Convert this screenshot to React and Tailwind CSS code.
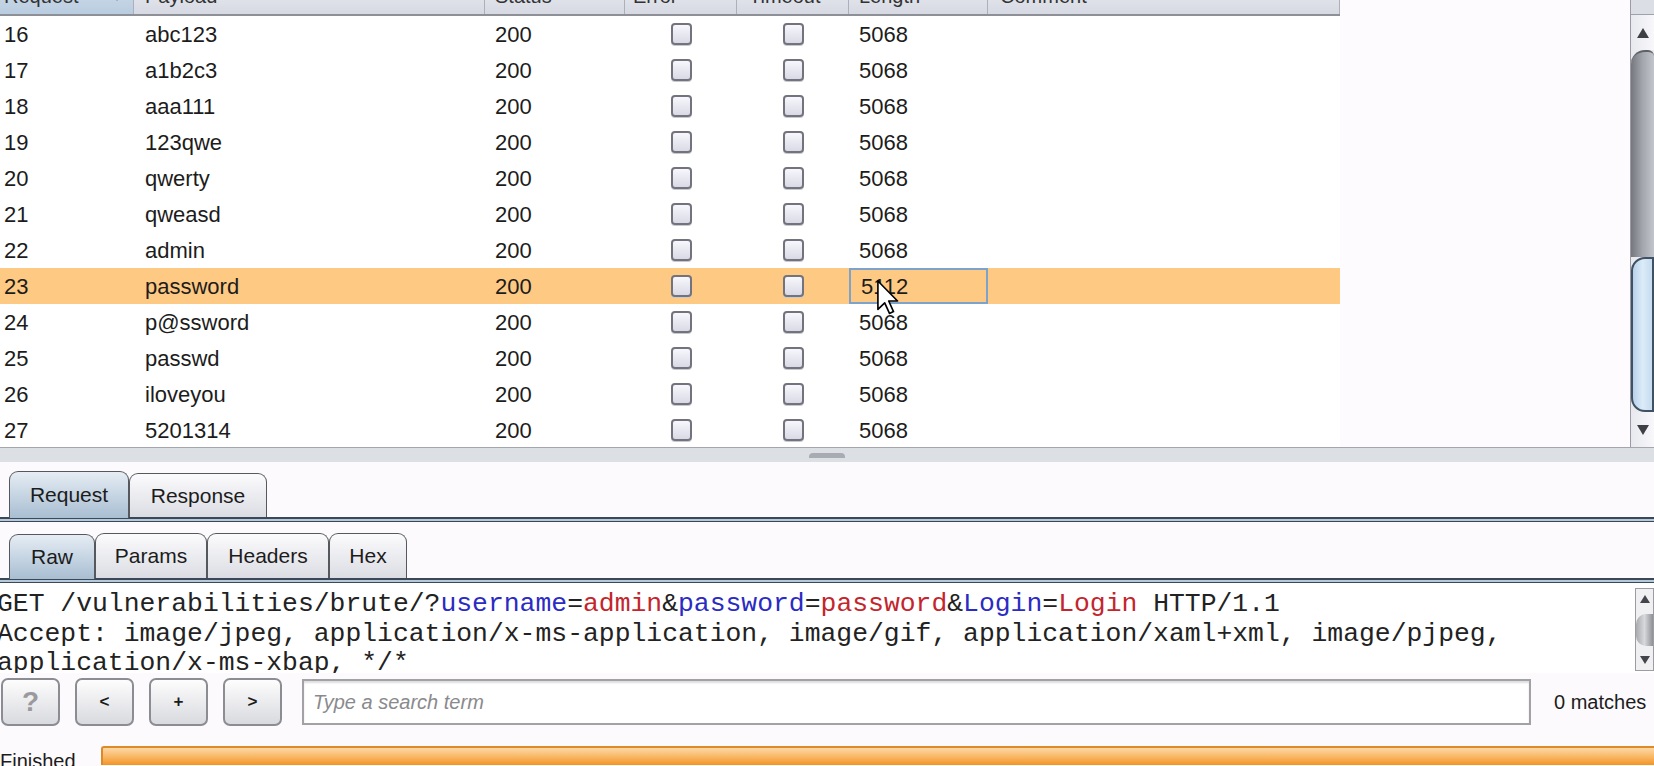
import React from 'react';

const rows = [
  ['16', 'abc123', '5068'],
  ['17', 'a1b2c3', '5068'],
  ['18', 'aaa111', '5068'],
  ['19', '123qwe', '5068'],
  ['20', 'qwerty', '5068'],
  ['21', 'qweasd', '5068'],
  ['22', 'admin', '5068'],
  ['23', 'password', '5112'],
  ['24', 'p@ssword', '5068'],
  ['25', 'passwd', '5068'],
  ['26', 'iloveyou', '5068'],
  ['27', '5201314', '5068'],
];

function Checkbox() {
  return (
    <span className="block w-[21px] h-[22px] rounded-[4px] border-2 border-[#72737c] bg-linear-to-b from-[#f7f7fc] to-[#d9dae5] shadow-[0_1px_0_#c8c8d0]" />
  );
}

function Tab({ label, active, w }) {
  return (
    <div
      className={`${w} h-full flex items-center justify-center rounded-t-[9px] border border-b-0 border-[#55595e] ${
        active
          ? 'bg-linear-to-b from-[#e6edf4] to-[#a8bed2] relative z-10 -mb-px'
          : 'bg-linear-to-b from-[#fbfbfd] to-[#dcdde3]'
      }`}
    >
      <span className="text-[21px] text-[#1c1c1c]">{label}</span>
    </div>
  );
}

function TabLine() {
  return <div className="h-[5px] border-t-2 border-b border-[#3c4856] bg-[#b4c9dc]" />;
}

function SmallButton({ children, className = '' }) {
  return (
    <div
      className={`w-[59px] h-[48px] flex items-center justify-center rounded-[7px] border-2 border-[#8c8d92] bg-linear-to-b from-[#fdfdfd] to-[#d9dadf] ${className}`}
    >
      {children}
    </div>
  );
}

function Cursor() {
  return (
    <svg className="absolute left-[877px] top-[280px] z-20" width="22" height="35" viewBox="0 0 12 19">
      <path d="M0.5 0.5 L0.5 16 L4.2 12.4 L6.8 18.2 L9 17.2 L6.4 11.4 L11.2 11.4 Z" fill="#fff" stroke="#000" strokeWidth="0.9" strokeLinejoin="round" />
    </svg>
  );
}

export default function App() {
  const headers = [
    ['Request', 'w-[134px] pl-[4px] bg-linear-to-b from-[#d3dfeb] to-[#b9cde0]'],
    ['Payload', 'w-[351px] pl-[11px]'],
    ['Status', 'w-[140px] pl-[10px]'],
    ['Error', 'w-[112px] pl-[8px]'],
    ['Timeout', 'w-[112px] pl-[12px]'],
    ['Length', 'w-[139px] pl-[10px]'],
    ['Comment', 'w-[352px] pl-[12px]'],
  ];

  return (
    <div className="relative w-[1654px] h-[766px] overflow-hidden bg-[#fdfafd] [font-family:'Liberation_Sans',Arial,sans-serif] text-[#1c1c1c]">
      {/* Results table */}
      <div className="flex h-[448px] border-b border-[#a4a5ad]">
        <div className="w-[1340px] flex flex-col bg-white">
          <div className="flex h-[38px] -mt-[22px] shrink-0 border-b-2 border-[#8e9098] bg-linear-to-b from-[#eef0f5] to-[#d6d9e2]">
            {headers.map(([label, cls], i) => (
              <div key={label} className={`${cls} relative flex items-center h-full border-r border-[#aeb0b9] text-[20px] text-[#333]`}>
                {label}
                {i === 0 && <span className="absolute left-[112px] top-[16px] w-0 h-0 border-x-[5px] border-x-transparent border-t-[7px] border-t-[#6a7480]" />}
              </div>
            ))}
          </div>
          {rows.map(([id, payload, len]) => {
            const sel = id === '23';
            return (
              <div key={id} className={`flex h-[36px] shrink-0 items-center text-[22px] ${sel ? 'bg-[#fec982]' : ''}`}>
                <div className="w-[134px] pl-[4px]">{id}</div>
                <div className="w-[351px] pl-[11px]">{payload}</div>
                <div className="w-[140px] pl-[10px]">200</div>
                <div className="w-[112px] flex justify-center"><Checkbox /></div>
                <div className="w-[112px] flex justify-center"><Checkbox /></div>
                <div className={`w-[139px] h-full flex items-center pl-[10px] ${sel ? 'border-2 border-[#7da2cc]' : ''}`}>{len}</div>
                <div className="w-[352px]" />
              </div>
            );
          })}
        </div>
        <div className="flex-1 bg-[#fefbfe]" />
        {/* Table scrollbar */}
        <div className="w-[24px] flex flex-col border-l border-[#9a9ba3] bg-[#e9eaee]">
          <div className="h-[15px] bg-[#dcdee5] border-b border-[#a0a2aa]" />
          <div className="h-[35px] flex items-center justify-center bg-linear-to-r from-[#e8e9ee] to-[#f8f8fb]">
            <span className="w-0 h-0 border-x-[6px] border-x-transparent border-b-[10px] border-b-[#3e3f45]" />
          </div>
          <div className="flex-1 flex flex-col">
            <div className="h-[207px] rounded-tl-[14px] rounded-tr-[6px] bg-linear-to-r from-[#75777f] via-[#a4a6ae] to-[#c3c5cc] border-t-2 border-[#5f6168]" />
            <div className="flex-1 rounded-tl-[14px] rounded-bl-[14px] border-2 border-[#3f5163] bg-linear-to-r from-[#b7d1ea] via-[#dcebf8] to-[#c6dcf0]" />
          </div>
          <div className="h-[35px] flex items-center justify-center bg-linear-to-r from-[#e8e9ee] to-[#f8f8fb]">
            <span className="w-0 h-0 border-x-[6px] border-x-transparent border-t-[10px] border-t-[#3e3f45]" />
          </div>
        </div>
      </div>

      {/* Split divider */}
      <div className="h-[14px] bg-[#dcdfe3] flex justify-center">
        <div className="mt-[5px] w-[36px] h-[5px] rounded-t-[4px] bg-[#a8abb2]" />
      </div>

      {/* Request / Response tabs */}
      <div className="pt-[8px] pl-[9px] flex items-end h-[55px]">
        <Tab label="Request" active w="w-[120px]" />
        <div className="h-[44px] flex items-end">
          <Tab label="Response" w="w-[138px]" />
        </div>
      </div>
      <TabLine />

      <div className="h-[11px]" />
      <div className="pl-[9px] flex items-end h-[45px]">
        <Tab label="Raw" active w="w-[86px]" />
        <Tab label="Params" w="w-[112px]" />
        <Tab label="Headers" w="w-[122px]" />
        <Tab label="Hex" w="w-[78px]" />
      </div>
      <TabLine />

      {/* Raw message */}
      <div className="h-[90px] flex bg-white">
        <div className="flex-1 pt-[7px] -ml-[3px] overflow-hidden [font-family:'Liberation_Mono','Courier_New',monospace] text-[26.4px] leading-[29.5px] text-[#222] whitespace-pre">
          <div>
            GET /vulnerabilities/brute/?
            <span className="text-[#2b2bc4]">username</span>=<span className="text-[#c4252d]">admin</span>&amp;
            <span className="text-[#2b2bc4]">password</span>=<span className="text-[#c4252d]">password</span>&amp;
            <span className="text-[#2b2bc4]">Login</span>=<span className="text-[#c4252d]">Login</span> HTTP/1.1
          </div>
          <div>Accept: image/jpeg, application/x-ms-application, image/gif, application/xaml+xml, image/pjpeg,</div>
          <div>application/x-ms-xbap, */*</div>
        </div>
        <div className="w-[19px] mt-[5px] h-[83px] flex flex-col border border-[#9c9ca2] bg-[#f0f0f2]">
          <div className="h-[20px] flex items-center justify-center">
            <span className="w-0 h-0 border-x-[5px] border-x-transparent border-b-[8px] border-b-[#44454a]" />
          </div>
          <div className="flex-1 flex items-center">
            <div className="w-full h-[32px] rounded-l-[10px] bg-linear-to-r from-[#a9aaae] via-[#d8d9dc] to-[#8f9095]" />
          </div>
          <div className="h-[20px] flex items-center justify-center">
            <span className="w-0 h-0 border-x-[5px] border-x-transparent border-t-[8px] border-t-[#44454a]" />
          </div>
        </div>
      </div>

      {/* Search bar */}
      <div className="flex items-center h-[53px] pt-[5px] pl-[1px]">
        <SmallButton className="w-[59px]">
          <span className="text-[28px] font-bold text-[#9a9a9e]">?</span>
        </SmallButton>
        <SmallButton className="ml-[15px]">
          <span className="text-[17px] font-bold">&lt;</span>
        </SmallButton>
        <SmallButton className="ml-[15px]">
          <span className="text-[17px] font-bold">+</span>
        </SmallButton>
        <SmallButton className="ml-[15px]">
          <span className="text-[17px] font-bold">&gt;</span>
        </SmallButton>
        <div className="ml-[20px] w-[1229px] h-[46px] flex items-center pl-[9px] border-2 border-[#a2a2a6] bg-white shadow-[inset_0_2px_2px_#dedede]">
          <span className="text-[20px] italic text-[#8a8a8e]">Type a search term</span>
        </div>
        <span className="ml-[23px] text-[20px] whitespace-nowrap">0 matches</span>
      </div>

      {/* Status bar */}
      <div className="flex items-end h-[30px] mt-[9px]">
        <span className="w-[101px] text-[20px] leading-[20px] -mb-[6px]">Finished</span>
        <div className="flex-1 h-[19px] border-t-2 border-l-2 border-[#de8a2a] rounded-tl-[3px] bg-linear-to-b from-[#fdd8a6] via-[#f9b865] to-[#f3941f]" />
      </div>

      <Cursor />
    </div>
  );
}
